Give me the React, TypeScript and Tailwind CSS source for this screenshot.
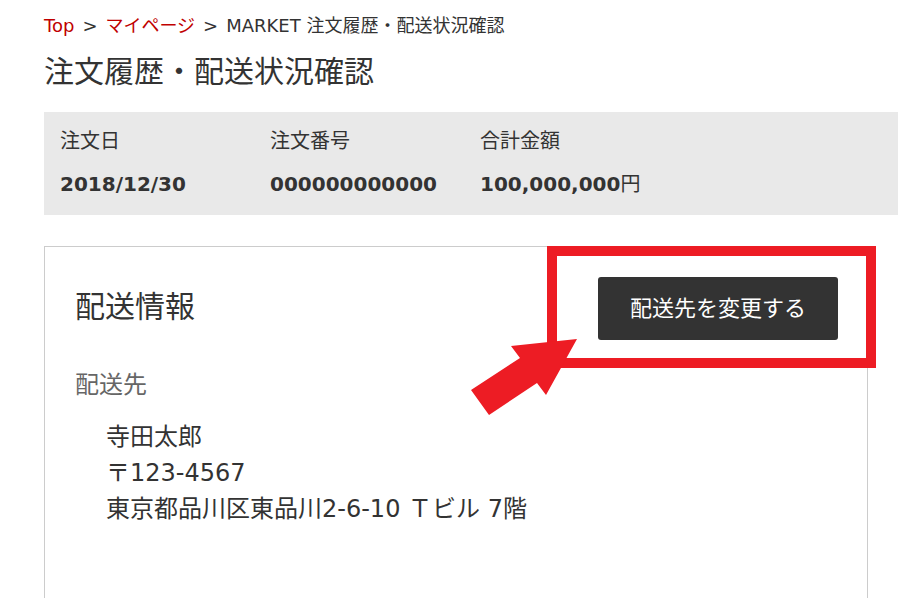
import React from "react";

const font = "font-['DejaVu_Sans','Noto_Sans_CJK_JP',sans-serif]";

export default function App() {
  return (
    <div className={`${font} min-h-screen bg-white text-[#333] pl-[44px] overflow-hidden`}>
      {/* Breadcrumb */}
      <nav className="flex items-center pt-[14px] text-[18px] leading-[24px] whitespace-nowrap">
        <span className="text-[#c00000]">Top</span>
        <span className="mx-[8px] text-[#333]">&gt;</span>
        <span className="text-[#c00000]">マイページ</span>
        <span className="mx-[8px] text-[#333]">&gt;</span>
        <span>MARKET 注文履歴・配送状況確認</span>
      </nav>

      {/* Page title */}
      <h1 className="mt-[14px] text-[30px] leading-[40px] font-normal">注文履歴・配送状況確認</h1>

      {/* Order summary */}
      <div className="mt-[20px] bg-[#e9e9e9] pl-[16px] pt-[14px] pb-[16px] text-[20px] leading-[30px]">
        <div className="flex">
          <div className="w-[210px]">注文日</div>
          <div className="w-[210px]">注文番号</div>
          <div className="w-[210px]">合計金額</div>
        </div>
        <div className="flex mt-[13px] font-bold">
          <div className="w-[210px]">2018/12/30</div>
          <div className="w-[210px]">000000000000</div>
          <div className="w-[210px]">
            100,000,000<span className="font-normal">円</span>
          </div>
        </div>
      </div>

      {/* Shipping card */}
      <div className="relative mt-[31px] mr-[30px] border border-[#cccccc] pl-[30px] pr-[29px] pt-[30px] pb-[120px]">
        <div className="flex items-center justify-between h-[63px]">
          <h2 className="text-[30px] leading-[40px] font-normal -mt-[4px]">配送情報</h2>
          <button className="w-[240px] h-[63px] bg-[#333] text-white text-[22px] rounded-[3px]">
            配送先を変更する
          </button>
        </div>

        <div className="mt-[27px] text-[24px] leading-[36px] text-[#666]">配送先</div>

        <div className="mt-[16px] pl-[31px] text-[24px] leading-[36px] text-[#333]">
          <p>寺田太郎</p>
          <p>〒123-4567</p>
          <p>東京都品川区東品川2-6-10 Ｔビル 7階</p>
        </div>

        {/* Annotation: red box + arrow */}
        <div className="absolute left-[502px] -top-[1px] w-[329px] h-[122px] border-[10px] border-[#ed1c24] pointer-events-none" />
        <svg
          className="absolute left-0 top-0 pointer-events-none"
          width="560"
          height="200"
          viewBox="-1 -1 560 200"
        >
          <polygon
            points="531,91 465,98 474,110 425,142 443,167 491,135 500,147"
            fill="#ed1c24"
          />
        </svg>
      </div>
    </div>
  );
}
